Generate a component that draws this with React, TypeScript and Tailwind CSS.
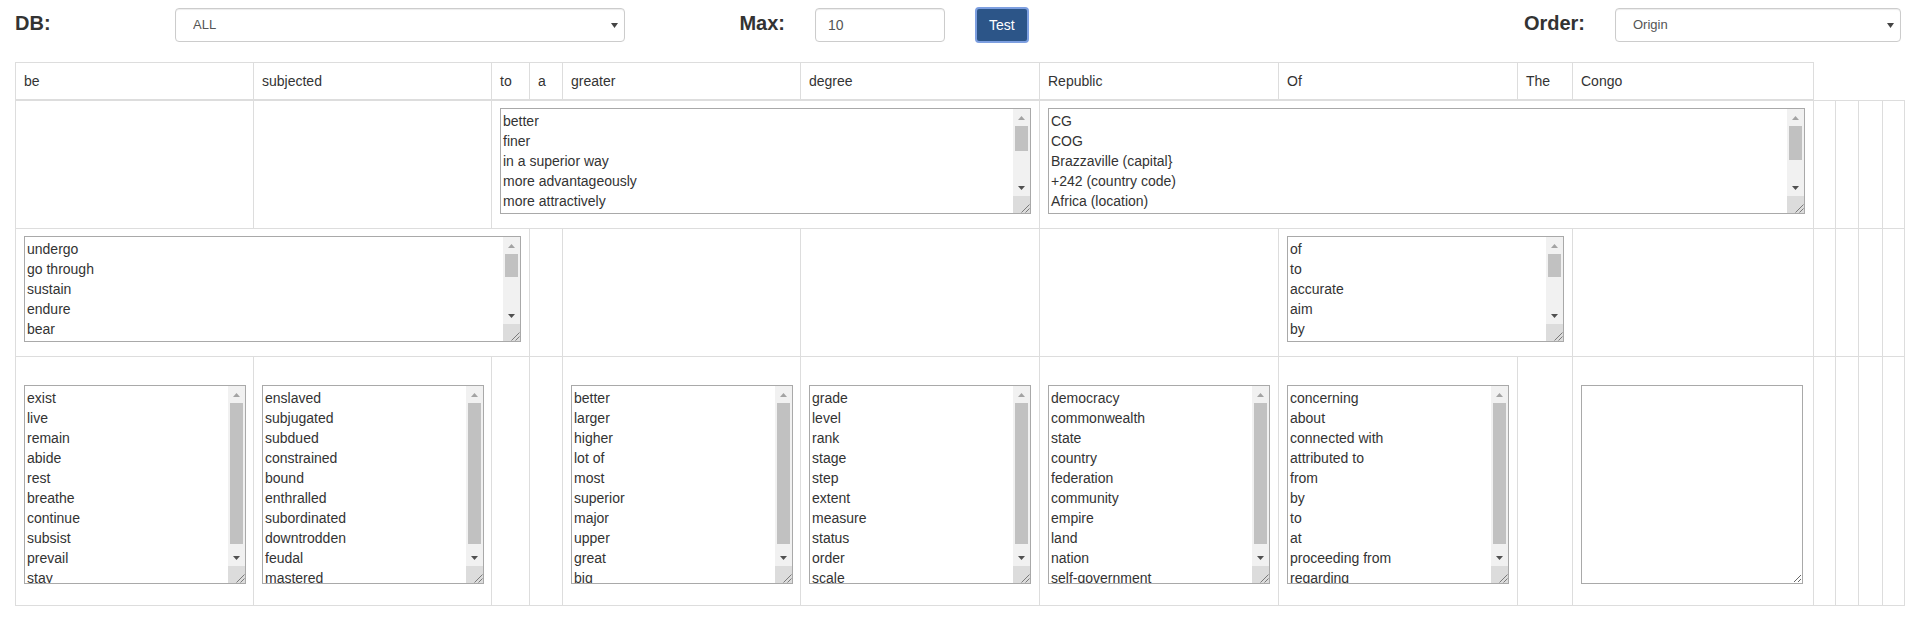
import React from "react";

const heads = ["be", "subjected", "to", "a", "greater", "degree", "Republic", "Of", "The", "Congo"];
const colWidths = ["w-[238px]", "w-[238px]", "w-[38px]", "w-[33px]", "w-[238px]", "w-[239px]", "w-[239px]", "w-[239px]", "w-[55px]", "w-[241px]", "w-[22px]", "w-[23px]", "w-[24px]", "w-[22px]"];

const row3: (string[] | null)[] = [
  ["exist", "live", "remain", "abide", "rest", "breathe", "continue", "subsist", "prevail", "stay"],
  ["enslaved", "subjugated", "subdued", "constrained", "bound", "enthralled", "subordinated", "downtrodden", "feudal", "mastered"],
  null,
  null,
  ["better", "larger", "higher", "lot of", "most", "superior", "major", "upper", "great", "big"],
  ["grade", "level", "rank", "stage", "step", "extent", "measure", "status", "order", "scale"],
  ["democracy", "commonwealth", "state", "country", "federation", "community", "empire", "land", "nation", "self-government"],
  ["concerning", "about", "connected with", "attributed to", "from", "by", "to", "at", "proceeding from", "regarding"],
  null,
  [],
];

const cell = "border border-[#ddd] p-[8px] align-top";
const text = "text-[14px] leading-[20px] text-[#333] outline-none p-[2px]";
const label = "mt-[4px] text-[20px] leading-[22px] font-bold";
const control =
  "block h-[34px] border border-[#ccc] rounded-[4px] bg-white text-[#555] shadow-[inset_0_1px_1px_rgba(0,0,0,0.075)]";

// textarea plus a drawn classic scrollbar (the browser hides real ones)
const Area = ({ lines, big }: { lines: string[]; big?: boolean }) => {
  const h = big ? 199 : 106;
  const inner = h - 2;
  const content = lines.length * 20 + 4;
  const track = inner - 51;
  const thumb = Math.round((track * inner) / content);
  return (
    <div
      className={`flex border border-[#a9a9a9] bg-white ${big ? "w-[222px] h-[199px]" : "w-full h-[106px]"}`}
    >
      <textarea
        readOnly
        defaultValue={lines.join("\n")}
        className={`${text} flex-1 min-w-0 h-full resize-none overflow-hidden`}
      />
      <div className="w-[17px] flex flex-col bg-[#f1f1f1]">
        <div className="h-[17px] flex items-center justify-center">
          <svg aria-hidden width="7" height="4" viewBox="0 0 7 4">
            <path d="M0 4h7L3.5 0z" fill="#a3a3a3" />
          </svg>
        </div>
        <div className="flex-1">
          <div className="mx-[2px] bg-[#c1c1c1]" style={{ height: thumb }} />
        </div>
        <div className="h-[17px] flex items-center justify-center">
          <svg aria-hidden width="7" height="4" viewBox="0 0 7 4">
            <path d="M0 0h7L3.5 4z" fill="#505050" />
          </svg>
        </div>
        <div className="h-[17px] bg-[#dcdcdc] flex items-end justify-end">
          <svg aria-hidden width="12" height="12" viewBox="0 0 12 12">
            <path d="M11.5 3.5l-8 8M11.5 7.5l-4 4" stroke="#7a7a7a" strokeWidth="1" />
          </svg>
        </div>
      </div>
    </div>
  );
};

const Caret = () => (
  <svg
    aria-hidden
    width="7"
    height="5"
    viewBox="0 0 7 5"
    className="absolute right-[7px] top-[15px]"
  >
    <path d="M0 0h7L3.5 5z" fill="#444" />
  </svg>
);

const Extra = () => (
  <>
    <td className={cell}></td>
    <td className={cell}></td>
    <td className={cell}></td>
    <td className={cell}></td>
  </>
);

export default function App() {
  return (
    <div className="w-[1914px] min-h-[618px] overflow-hidden bg-white text-[#333] text-[14px] leading-[20px] font-['Liberation_Sans',Arial,sans-serif]">
      <div className="grid grid-cols-[repeat(12,160px)] pt-[8px]">
        <div className="px-[15px]">
          <h4 className={label}>DB:</h4>
        </div>
        <div className="col-span-3 px-[15px]">
          <div className="relative">
            <select className={`${control} appearance-none w-full pl-[17px] pr-[24px] text-[13px]`}>
              <option>ALL</option>
            </select>
            <Caret />
          </div>
        </div>
        <div className="px-[15px] text-right">
          <h4 className={label}>Max:</h4>
        </div>
        <div className="px-[15px]">
          <input defaultValue="10" className={`${control} w-full px-[12px] text-[14px]`} />
        </div>
        <div className="px-[15px] h-[34px]">
          <button className="h-[36px] -mt-[1px] px-[12px] rounded-[4px] bg-[#2c5588] border-2 border-[#7d9fe0] text-white text-[14px]">
            Test
          </button>
        </div>
        <div className="col-span-2"></div>
        <div className="px-[15px] text-right">
          <h4 className={label}>Order:</h4>
        </div>
        <div className="col-span-2 px-[15px]">
          <div className="relative w-[286px]">
            <select className={`${control} appearance-none w-full pl-[17px] pr-[24px] text-[13px]`}>
              <option>Origin</option>
            </select>
            <Caret />
          </div>
        </div>
      </div>

      <div className="px-[15px] mt-[20px]">
        <table className="border-collapse table-fixed w-[1889px]">
          <colgroup>
            {colWidths.map((w, i) => (
              <col key={i} className={w} />
            ))}
          </colgroup>
          <thead>
            <tr>
              {heads.map((h, i) => (
                <th key={i} className="border border-[#ddd] border-b-2 p-[8px] text-left font-normal">
                  {h}
                </th>
              ))}
            </tr>
          </thead>
          <tbody>
            <tr>
              <td className={cell}></td>
              <td className={cell}></td>
              <td colSpan={4} className={`${cell} pt-[7px] pb-[14px]`}>
                <Area
                  lines={["better", "finer", "in a superior way", "more advantageously", "more attractively", "more effectively", "more fully", "more skillfully", "more suitably", "preferably", "rather"]}
                />
              </td>
              <td colSpan={4} className={`${cell} pt-[7px] pb-[14px]`}>
                <Area
                  lines={["CG", "COG", "Brazzaville (capital}", "+242 (country code)", "Africa (location)", "Republic of the Congo", "Congo-Brazzaville", "Congo"]}
                />
              </td>
              <Extra />
            </tr>
            <tr>
              <td colSpan={3} className={`${cell} pt-[7px] pb-[14px]`}>
                <Area
                  lines={["undergo", "go through", "sustain", "endure", "bear", "experience", "suffer", "face", "encounter", "meet with", "be exposed to", "tolerate"]}
                />
              </td>
              <td className={cell}></td>
              <td className={cell}></td>
              <td className={cell}></td>
              <td className={cell}></td>
              <td colSpan={2} className={`${cell} pt-[7px] pb-[14px]`}>
                <Area lines={["of", "to", "accurate", "aim", "by", "for", "from", "about", "on", "at", "with", "in"]} />
              </td>
              <td className={cell}></td>
              <Extra />
            </tr>
            <tr>
              {row3.map((l, i) =>
                l && l.length ? (
                  <td key={i} className={`${cell} pt-[28px] pb-[21px]`}>
                    <Area lines={l} big />
                  </td>
                ) : l ? (
                  <td key={i} className={`${cell} pt-[28px] pb-[21px]`}>
                    <textarea className={`${text} block w-[222px] h-[199px] border border-[#a9a9a9] bg-white`} />
                  </td>
                ) : (
                  <td key={i} className={cell}></td>
                )
              )}
              <Extra />
            </tr>
          </tbody>
        </table>
      </div>
    </div>
  );
}
